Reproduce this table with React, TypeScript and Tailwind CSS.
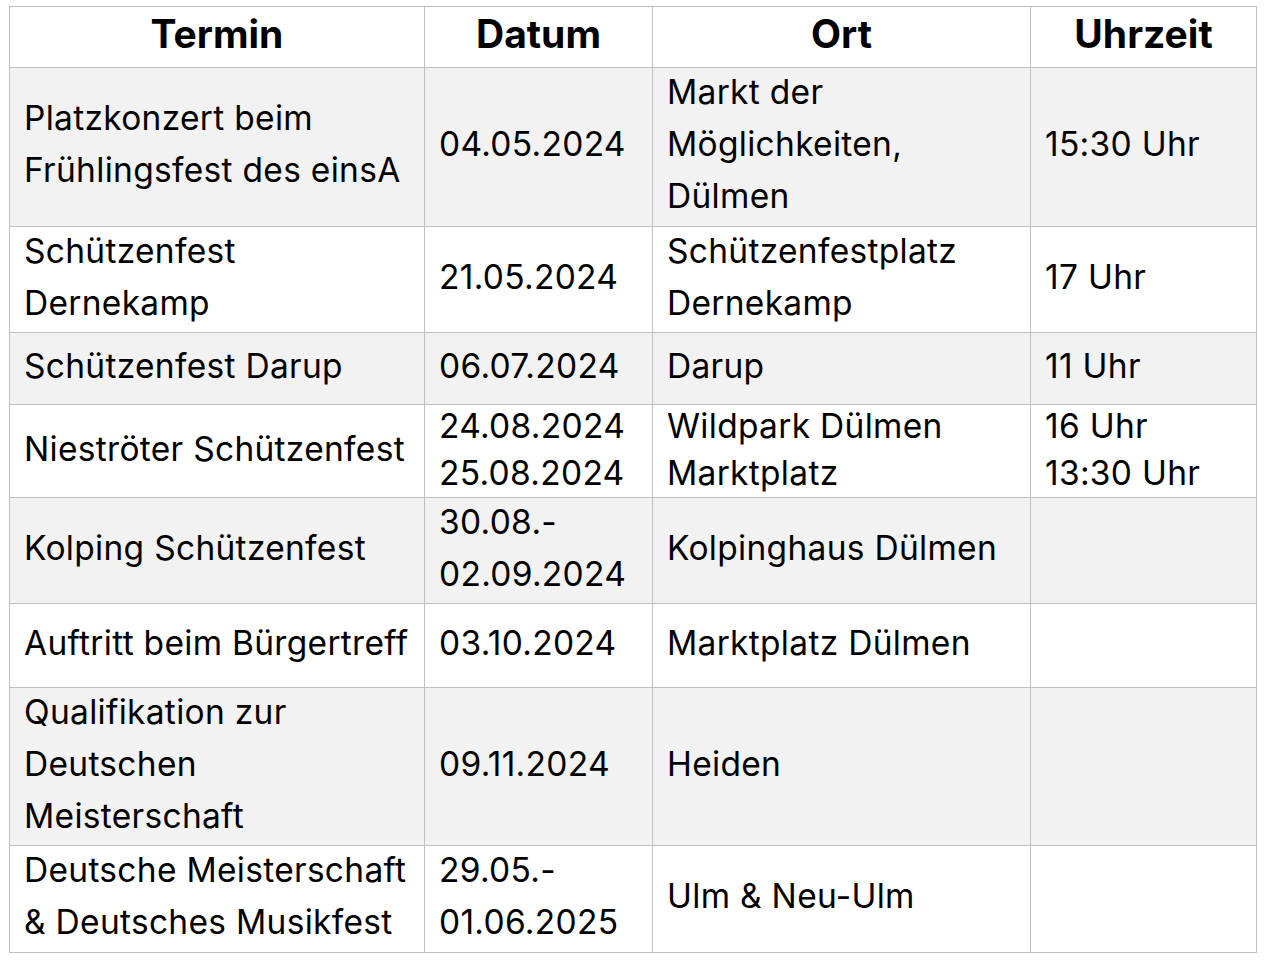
import React from "react";

type Row = {
    termin: string[];
    datum: string[];
    ort: string[];
    zeit: string[];
    h: string;
    tight?: boolean;
    shaded?: boolean;
};

const rows: Row[] = [
    {termin: ["Platzkonzert beim", "Frühlingsfest des einsA"], datum: ["04.05.2024"], ort: ["Markt der", "Möglichkeiten,", "Dülmen"], zeit: ["15:30 Uhr"], h: "h-[159px]", shaded: true},
    {termin: ["Schützenfest", "Dernekamp"], datum: ["21.05.2024"], ort: ["Schützenfestplatz", "Dernekamp"], zeit: ["17 Uhr"], h: "h-[106px]"},
    {termin: ["Schützenfest Darup"], datum: ["06.07.2024"], ort: ["Darup"], zeit: ["11 Uhr"], h: "h-[72px]", shaded: true},
    {termin: ["Nieströter Schützenfest"], datum: ["24.08.2024", "25.08.2024"], ort: ["Wildpark Dülmen", "Marktplatz"], zeit: ["16 Uhr", "13:30 Uhr"], h: "h-[93px]", tight: true},
    {termin: ["Kolping Schützenfest"], datum: ["30.08.-", "02.09.2024"], ort: ["Kolpinghaus Dülmen"], zeit: [], h: "h-[106px]", shaded: true},
    {termin: ["Auftritt beim Bürgertreff"], datum: ["03.10.2024"], ort: ["Marktplatz Dülmen"], zeit: [], h: "h-[84px]"},
    {termin: ["Qualifikation zur", "Deutschen", "Meisterschaft"], datum: ["09.11.2024"], ort: ["Heiden"], zeit: [], h: "h-[158px]", shaded: true},
    {termin: ["Deutsche Meisterschaft", "& Deutsches Musikfest"], datum: ["29.05.-", "01.06.2025"], ort: ["Ulm & Neu-Ulm"], zeit: [], h: "h-[107px]"},
];

function Cell({lines, tight}: { lines: string[]; tight?: boolean }) {
    return (
        <td className={`border border-[#bfbfbf] pl-[14px] pr-1 py-0 align-middle whitespace-nowrap ${tight ? "leading-[47px]" : "leading-[52px]"}`}>
            <div className={tight ? "-mt-[3px]" : "-mt-[6px]"}>
                {lines.map((l, i) => (
                    <div key={i}>{l}</div>
                ))}
            </div>
        </td>
    );
}

export default function App() {
    return (
        <div className="min-h-[960px] w-[1268px] bg-white pt-[6px] pl-[9px]">
            <table
                className="border-collapse table-fixed text-[33.5px] tracking-[0.3px] text-black"
                style={{fontFamily: "Inter, 'Noto Sans', sans-serif"}}>
                <colgroup>
                    <col className="w-[415px]"/>
                    <col className="w-[228px]"/>
                    <col className="w-[378px]"/>
                    <col className="w-[226px]"/>
                </colgroup>
                <thead>
                <tr className="h-[61px]">
                    {["Termin", "Datum", "Ort", "Uhrzeit"].map((t) => (
                        <th key={t} className="border border-[#bfbfbf] font-bold text-[39px] tracking-normal text-center align-middle leading-[52px] pb-[7px]">{t}</th>
                    ))}
                </tr>
                </thead>
                <tbody>
                {rows.map((r, i) => (
                    <tr key={i} className={`${r.h} ${r.shaded ? "bg-[#f2f2f2]" : "bg-white"}`}>
                        <Cell lines={r.termin} tight={r.tight}/>
                        <Cell lines={r.datum} tight={r.tight}/>
                        <Cell lines={r.ort} tight={r.tight}/>
                        <Cell lines={r.zeit} tight={r.tight}/>
                    </tr>
                ))}
                </tbody>
            </table>
        </div>
    );
}
